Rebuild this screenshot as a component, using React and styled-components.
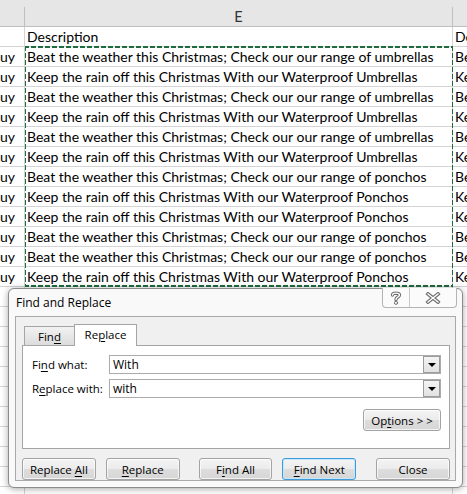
import styled, { createGlobalStyle } from "styled-components";

const GlobalStyle = createGlobalStyle`
  html, body {
    margin: 0;
    padding: 0;
    width: 467px;
    height: 494px;
    overflow: hidden;
    background: #ffffff;
  }
`;

const rows = [
  "Beat the weather this Christmas; Check our our range of umbrellas",
  "Keep the rain off this Christmas With our Waterproof Umbrellas",
  "Beat the weather this Christmas; Check our our range of umbrellas",
  "Keep the rain off this Christmas With our Waterproof Umbrellas",
  "Beat the weather this Christmas; Check our our range of umbrellas",
  "Keep the rain off this Christmas With our Waterproof Umbrellas",
  "Beat the weather this Christmas; Check our our range of ponchos",
  "Keep the rain off this Christmas With our Waterproof Ponchos",
  "Keep the rain off this Christmas With our Waterproof Ponchos",
  "Beat the weather this Christmas; Check our our range of ponchos",
  "Beat the weather this Christmas; Check our our range of ponchos",
  "Keep the rain off this Christmas With our Waterproof Ponchos",
];

const EMPTY_ROWS = 11;
const ANTS = "#1d6b3e";

const Page = styled.div`
  position: relative;
  width: 467px;
  height: 494px;
  overflow: hidden;
`;

const Sheet = styled.div`
  display: flex;
  font-family: Lato, "Liberation Sans", sans-serif;
  font-size: 14px;
  color: #000;
`;

const Column = styled.div`
  flex: 0 0 ${(p) => p.$width}px;
  display: flex;
  flex-direction: column;
  overflow: hidden;
`;

const HeaderCell = styled.div`
  height: 19px;
  padding-top: 7px;
  background: #e6e6e6;
  border-bottom: 1px solid #bfbfbf;
`;

const HeaderLabel = styled.div`
  height: 19px;
  line-height: 19px;
  text-align: center;
  font-size: 14.5px;
  color: #333;
  border-right: ${(p) => (p.$open ? "none" : "1px solid #bfbfbf")};
`;

const Cell = styled.div`
  height: 19px;
  line-height: 19px;
  padding: 0 2px;
  white-space: nowrap;
  overflow: hidden;
  border-bottom: 1px solid #d4d4d4;
  border-right: ${(p) => (p.$open ? "none" : "1px solid #d4d4d4")};
`;

/* text spilling in from the column to the left, clipped at the view edge */
const SpillCell = styled(Cell)`
  direction: rtl;
  padding: 0 9px 0 0;
`;

/* copy marquee ("marching ants") around the selected range */
const Marquee = styled.div`
  position: relative;
  &::after {
    content: "";
    position: absolute;
    top: -1px;
    left: -1px;
    right: -1px;
    bottom: 0;
    pointer-events: none;
    background:
      repeating-linear-gradient(90deg, ${ANTS} 0 5px, transparent 5px 7px) top left / 100% 2px no-repeat,
      repeating-linear-gradient(90deg, ${ANTS} 0 5px, transparent 5px 7px) bottom left / 100% 2px no-repeat,
      repeating-linear-gradient(180deg, ${ANTS} 0 5px, transparent 5px 7px) top left / 2px 100% no-repeat,
      repeating-linear-gradient(180deg, ${ANTS} 0 5px, transparent 5px 7px) top right / 2px 100% no-repeat;
  }
`;

const Dialog = styled.div`
  position: absolute;
  left: 8px;
  top: 288px;
  width: 455px;
  height: 200px;
  box-sizing: border-box;
  display: flex;
  flex-direction: column;
  padding: 0 6px 6px;
  border: 1px solid #8c8c8c;
  border-radius: 6px;
  background: #f9f9f9;
  box-shadow: 0 1px 7px rgba(0, 0, 0, 0.35);
  font-family: "Open Sans", "Noto Sans", sans-serif;
  font-size: 11.5px;
  color: #000;
`;

const TitleBar = styled.div`
  height: 28px;
  display: flex;
  justify-content: space-between;
  align-items: flex-start;
`;

const Title = styled.div`
  padding: 6px 0 0 1px;
  line-height: 16px;
  font-size: 12px;
`;

const TitleButtons = styled.div`
  display: flex;
  height: 19px;
  margin: -1px -1px 0 0;
  border: 1px solid #b4b4b4;
  border-top: none;
  border-radius: 0 0 4px 4px;
  background: #fbfbfb;
`;

const TitleButton = styled.div`
  width: ${(p) => p.$width}px;
  display: flex;
  align-items: center;
  justify-content: center;
  & + & {
    border-left: 1px solid #c8c8c8;
  }
`;

const Client = styled.div`
  flex: 1;
  display: flex;
  flex-direction: column;
  padding: 7px 5px 0 6px;
  border: 1px solid #a9a9a9;
  background: #f0f0f0;
`;

const TabStrip = styled.div`
  display: flex;
  align-items: flex-end;
  padding-left: 2px;
  margin-bottom: -1px;
  position: relative;
  z-index: 1;
`;

const Tab = styled.div`
  box-sizing: border-box;
  width: ${(p) => p.$width}px;
  height: ${(p) => (p.$active ? 22 : 19)}px;
  margin-bottom: ${(p) => (p.$active ? 0 : 1)}px;
  margin-left: ${(p) => (p.$active ? -1 : 0)}px;
  display: flex;
  align-items: center;
  justify-content: center;
  padding-bottom: ${(p) => (p.$active ? 2 : 0)}px;
  border: 1px solid #a5a5a5;
  border-bottom: none;
  background: ${(p) =>
    p.$active ? "#ffffff" : "linear-gradient(#f2f2f2, #dcdcdc)"};
`;

const Panel = styled.div`
  height: 93px;
  padding: 9px 8px 0 9px;
  border: 1px solid #a5a5a5;
  background: #ffffff;
  display: flex;
  flex-direction: column;
  gap: 5px;
`;

const FieldRow = styled.div`
  display: flex;
  align-items: center;
`;

const Label = styled.div`
  width: 77px;
`;

const Combo = styled.div`
  flex: 1;
  box-sizing: border-box;
  height: 19px;
  display: flex;
  border: 1px solid #ababab;
  background: #fff;
`;

const ComboText = styled.div`
  flex: 1;
  padding-left: 3px;
  line-height: 17px;
  font-size: 12px;
`;

const DropButton = styled.div`
  box-sizing: border-box;
  width: 17px;
  height: 17px;
  display: flex;
  align-items: center;
  justify-content: center;
  border: 1px solid #9c9c9c;
  background: linear-gradient(#f4f4f4, #e2e2e2);
  &::before {
    content: "";
    border-left: 4px solid transparent;
    border-right: 4px solid transparent;
    border-top: 4px solid #000;
    margin-top: 1px;
  }
`;

const OptionsRow = styled.div`
  display: flex;
  justify-content: flex-end;
  margin-top: 6px;
`;

const Button = styled.div`
  box-sizing: border-box;
  width: ${(p) => p.$width || 74}px;
  height: 22px;
  margin-left: ${(p) => p.$gap || 0}px;
  display: flex;
  align-items: center;
  justify-content: center;
  white-space: pre;
  border: 1px solid ${(p) => (p.$focused ? "#3c9ad8" : "#a3a3a3")};
  border-radius: 3px;
  background: linear-gradient(#f4f4f4 0%, #ebebeb 50%, #dddddd 51%, #d6d6d6 100%);
  box-shadow: ${(p) =>
    p.$focused
      ? "inset 0 0 0 1px #c6e7fb"
      : "inset 0 0 0 1px rgba(255,255,255,0.7)"};
`;

const ButtonRow = styled.div`
  display: flex;
  margin-top: 9px;
`;

const Key = styled.span`
  text-decoration: underline;
  text-underline-offset: 2px;
`;

const QuestionIcon = () => (
  <svg width="12" height="14" viewBox="0 0 12 14">
    <g fill="none" strokeLinecap="round" strokeLinejoin="round">
      <path
        d="M2.5 4 C2.5 1.5 9.5 1.5 9.5 4 C9.5 6 6 6 6 8.5"
        stroke="#6e6e6e"
        strokeWidth="3.4"
      />
      <path
        d="M2.5 4 C2.5 1.5 9.5 1.5 9.5 4 C9.5 6 6 6 6 8.5"
        stroke="#ffffff"
        strokeWidth="1.4"
      />
      <circle cx="6" cy="11.8" r="1.6" fill="#fff" stroke="#6e6e6e" />
    </g>
  </svg>
);

const CloseIcon = () => (
  <svg width="16" height="12" viewBox="0 0 16 12">
    <g fill="none" strokeLinecap="square">
      <path d="M3 2 L13 10 M13 2 L3 10" stroke="#6e6e6e" strokeWidth="3.6" />
      <path d="M3 2 L13 10 M13 2 L3 10" stroke="#ffffff" strokeWidth="1.4" />
    </g>
  </svg>
);

const empties = Array.from({ length: EMPTY_ROWS });

export default function App() {
  return (
    <Page>
      <GlobalStyle />
      <Sheet>
        <Column $width={25}>
          <HeaderCell>
            <HeaderLabel />
          </HeaderCell>
          <Cell />
          {rows.map((_, i) => (
            <SpillCell key={i}>buy</SpillCell>
          ))}
          {empties.map((_, i) => (
            <Cell key={"e" + i} />
          ))}
        </Column>
        <Column $width={428}>
          <HeaderCell>
            <HeaderLabel>E</HeaderLabel>
          </HeaderCell>
          <Cell>Description</Cell>
          <Marquee>
            {rows.map((text, i) => (
              <Cell key={i}>{text}</Cell>
            ))}
          </Marquee>
          {empties.map((_, i) => (
            <Cell key={"e" + i} />
          ))}
        </Column>
        <Column $width={40}>
          <HeaderCell>
            <HeaderLabel $open />
          </HeaderCell>
          <Cell $open>Description</Cell>
          {rows.map((text, i) => (
            <Cell key={i} $open>
              {text}
            </Cell>
          ))}
          {empties.map((_, i) => (
            <Cell key={"e" + i} $open />
          ))}
        </Column>
      </Sheet>

      <Dialog>
        <TitleBar>
          <Title>Find and Replace</Title>
          <TitleButtons>
            <TitleButton $width={26}>
              <QuestionIcon />
            </TitleButton>
            <TitleButton $width={46}>
              <CloseIcon />
            </TitleButton>
          </TitleButtons>
        </TitleBar>
        <Client>
          <TabStrip>
            <Tab $width={51}>
              <span>
                Fin<Key>d</Key>
              </span>
            </Tab>
            <Tab $width={63} $active>
              <span>
                Re<Key>p</Key>lace
              </span>
            </Tab>
          </TabStrip>
          <Panel>
            <FieldRow>
              <Label>
                Fi<Key>n</Key>d what:
              </Label>
              <Combo>
                <ComboText>With</ComboText>
                <DropButton />
              </Combo>
            </FieldRow>
            <FieldRow>
              <Label>
                R<Key>e</Key>place with:
              </Label>
              <Combo>
                <ComboText>with</ComboText>
                <DropButton />
              </Combo>
            </FieldRow>
            <OptionsRow>
              <Button $width={78}>
                <span>
                  Op<Key>t</Key>ions &gt; &gt;
                </span>
              </Button>
            </OptionsRow>
          </Panel>
          <ButtonRow>
            <Button>
              <span>
                Replace <Key>A</Key>ll
              </span>
            </Button>
            <Button $gap={10}>
              <span>
                <Key>R</Key>eplace
              </span>
            </Button>
            <Button $gap={19}>
              <span>
                F<Key>i</Key>nd All
              </span>
            </Button>
            <Button $gap={10} $focused>
              <span>
                <Key>F</Key>ind Next
              </span>
            </Button>
            <Button $gap={20}>
              <span>Close</span>
            </Button>
          </ButtonRow>
        </Client>
      </Dialog>
    </Page>
  );
}
